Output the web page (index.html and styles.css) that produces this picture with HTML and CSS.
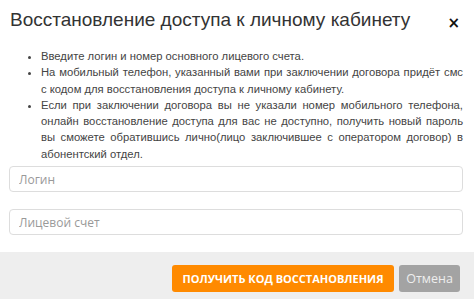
FILE: index.html
```html
<!DOCTYPE html>
<html lang="ru">
<head>
    <meta charset="UTF-8">
    <meta name="viewport" content="width=device-width, initial-scale=1.0">
    <title>Восстановление доступа</title>
    <link rel="stylesheet" href="styles.css">
</head>
<body>
    <div class="modal">
        <!-- Header -->
        <div class="modal-header">
            <h4 class="modal-title">Восстановление доступа к личному кабинету</h4>
            <button type="button" class="close">&times;</button>
        </div>

        <!-- Body -->
        <div class="modal-body">
            <ul class="hint-list">
                <li>Введите логин и номер основного лицевого счета.</li>
                <li>На мобильный телефон, указанный вами при заключении договора придёт смс с кодом для восстановления доступа к личному кабинету.</li>
                <li>Если при заключении договора вы не указали номер мобильного телефона, онлайн восстановление доступа для вас не доступно, получить новый пароль вы сможете обратившись лично(лицо заключившее с оператором договор) в абонентский отдел.</li>
            </ul>
            <form class="restore-form">
                <input type="text" class="form-control" placeholder="Логин">
                <input type="text" class="form-control" placeholder="Лицевой счет">
            </form>
        </div>

        <!-- Footer -->
        <div class="modal-footer">
            <button type="button" class="btn btn-orange">Получить код восстановления</button>
            <button type="button" class="btn btn-gray">Отмена</button>
        </div>
    </div>
</body>
</html>
```

FILE: styles.css
```css
/* General */
body {
    margin: 0;
    padding: 0;
    background-color: #fff;
    font-family: 'Liberation Sans', Arial, sans-serif;
    color: #333;
}

.modal {
    width: 474px;
    height: 299px;
    display: flex;
    flex-direction: column;
    overflow: hidden;
}

/* Header */
.modal-header {
    display: flex;
    justify-content: space-between;
    align-items: flex-start;
    padding: 9px 14px 0 10px;
}

.modal-title {
    margin: 0;
    font-size: 19px;
    font-weight: normal;
    line-height: 22px;
    color: #333;
}

.close {
    margin-top: 8px;
    padding: 0;
    border: none;
    background: none;
    font-family: 'DejaVu Sans', sans-serif;
    font-size: 15px;
    font-weight: bold;
    line-height: 13px;
    color: #111;
    cursor: pointer;
}

/* Body */
.modal-body {
    padding: 17px 11px 0 9px;
}

.hint-list {
    margin: 0;
    padding-left: 32px;
    font-size: 11.25px;
    line-height: 16.3px;
    color: #444;
    text-align: justify;
}

.restore-form {
    display: flex;
    flex-direction: column;
    gap: 17px;
    margin-top: 4px;
}

.form-control {
    box-sizing: border-box;
    width: 454px;
    height: 26px;
    padding: 0 9px;
    border: 1px solid #ddd;
    border-radius: 4px;
    font-family: 'Open Sans', sans-serif;
    font-size: 12px;
    color: #555;
}

.form-control::placeholder {
    color: #999;
}

/* Footer */
.modal-footer {
    margin-top: auto;
    height: 47px;
    box-sizing: border-box;
    display: flex;
    justify-content: flex-end;
    gap: 5px;
    padding: 13px 14px 0 0;
    background-color: #eee;
}

.btn {
    height: 27px;
    padding: 0;
    border: none;
    border-radius: 3px;
    font-family: 'Open Sans', sans-serif;
    white-space: nowrap;
    cursor: pointer;
}

.btn-orange {
    width: 222px;
    background-color: #ff8a00;
    color: #fff;
    font-size: 11px;
    font-weight: bold;
    text-transform: uppercase;
}

.btn-gray {
    width: 61px;
    background-color: #a3a3a3;
    color: #eee;
    font-size: 12.5px;
}
```
